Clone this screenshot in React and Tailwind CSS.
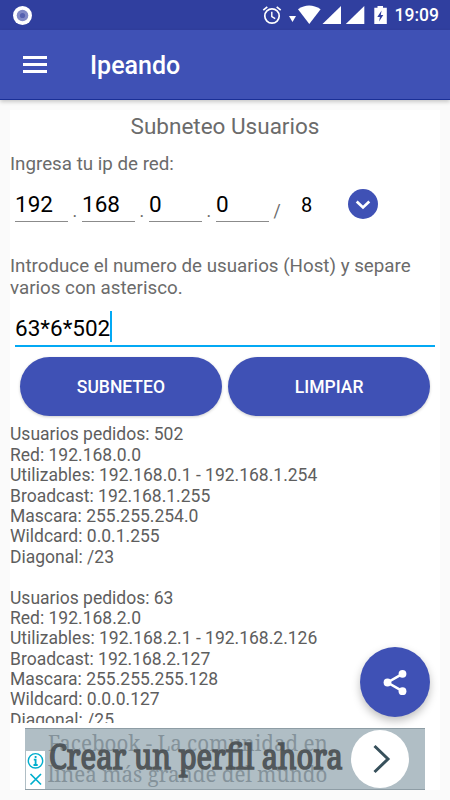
import React from "react";

function StatusBar() {
  return (
    <div className="flex h-[30px] items-center bg-[#303f9f] text-white">
      <svg className="ml-[13px] size-[19px]" viewBox="0 0 19 19">
        <circle cx="9.5" cy="9.5" r="9.5" fill="#fff" />
        <circle cx="9.5" cy="9.5" r="5.8" fill="#8189c6" />
        <circle cx="9.5" cy="9.5" r="2.6" fill="#5560b0" />
      </svg>
      <svg className="ml-auto h-[30px] w-[132px]" viewBox="262 0 132 30" fill="#fff">
        <g fill="none" stroke="#fff" strokeWidth="1.7">
          <circle cx="272" cy="16" r="7.2" />
          <path d="M271.8 11.8v4.7l3.4 2.1" strokeWidth="1.4" />
          <path d="M263.3 10.2l4-3.4M280.7 10.2l-4-3.4" />
        </g>
        <path d="M289 16h7l-3.5 6z" />
        <path d="M298 9.2Q309 1.8 320.6 9.2L309.3 24z" />
        <path d="M341 6v18h-18.5z" />
        <path d="M364.3 6v18h-18.5z" />
        <path d="M377.5 6h5.5v1.8h3.8v16.2h-12.5V7.8h3.2z" />
        <path d="M381.6 10.5l-4.3 6.5h2.6l-.8 4.5 4.2-6.6h-2.5z" fill="#303f9f" />
      </svg>
      <span className="mr-[11px] w-[45px] text-right text-[17.5px] font-medium leading-[30px]">
        19:09
      </span>
    </div>
  );
}

function Toolbar() {
  return (
    <header className="relative z-10 flex h-[70px] items-center border-b border-[#1a2f96] bg-[#3f51b5] pl-[23px] text-white shadow-[0_2px_4px_rgba(0,0,0,0.2)]">
      <div className="flex w-6 flex-col gap-[4.5px]">
        <span className="h-[2.5px] bg-white" />
        <span className="h-[2.5px] bg-white" />
        <span className="h-[2.5px] bg-white" />
      </div>
      <h1 className="ml-[43px] mt-[2px] text-[25px] font-medium leading-[30px]">Ipeando</h1>
    </header>
  );
}

function Octet({ value, separator }) {
  return (
    <div className="flex h-[34px] w-[67px] items-end">
      <div className="h-[34px] w-[52.5px] shrink-0 border-b-[1.5px] border-[#8b8b8b] text-[22.5px] leading-[32px] text-black">
        {value}
      </div>
      <span className="ml-[5px] text-[17.5px] leading-[22px]">{separator}</span>
    </div>
  );
}

const results = [
  "Usuarios pedidos: 502",
  "Red: 192.168.0.0",
  "Utilizables: 192.168.0.1 - 192.168.1.254",
  "Broadcast: 192.168.1.255",
  "Mascara: 255.255.254.0",
  "Wildcard: 0.0.1.255",
  "Diagonal: /23",
  "",
  "Usuarios pedidos: 63",
  "Red: 192.168.2.0",
  "Utilizables: 192.168.2.1 - 192.168.2.126",
  "Broadcast: 192.168.2.127",
  "Mascara: 255.255.255.128",
  "Wildcard: 0.0.0.127",
  "Diagonal: /25",
];

function AdBanner() {
  return (
    <div className="relative mx-[15px] mt-[5px] flex h-[62px] items-center overflow-hidden border-y border-[#8e9da5] bg-[#b0bec5] font-['Noto_Serif','DejaVu_Serif',serif]">
      <div className="absolute left-[23px] top-[-2px] origin-left scale-x-[0.934] whitespace-nowrap text-[22px] leading-[31px] text-[#84929a]">
        <p>Facebook - La comunidad en</p>
        <p>línea más grande del mundo</p>
      </div>
      <div className="absolute left-[24px] top-[4px] origin-left scale-x-[0.856] whitespace-nowrap text-[34px] leading-[46px] text-[#484d50] opacity-90 [-webkit-text-stroke:1.6px_#484d50]">
        Crear un perfil ahora
      </div>
      <div className="absolute bottom-0 left-[1px] flex h-[38px] w-[19px] flex-col items-center bg-white">
        <svg className="h-[38px] w-[19px]" viewBox="0 0 19 38" fill="none" stroke="#00aecd">
          <circle cx="9.5" cy="9.8" r="7.2" strokeWidth="1.4" />
          <path d="M9.6 5v2M7.8 8.7h1.8v5M7.5 14h4.2" strokeWidth="1.8" />
          <path d="M4.5 23l10.5 10.5M15 23L4.5 33.5" strokeWidth="1.7" />
        </svg>
      </div>
      <div className="ml-auto mr-[16px] flex size-[58px] items-center justify-center rounded-full bg-white">
        <svg className="size-[58px]" viewBox="0 0 58 58" fill="none" stroke="#37505b" strokeWidth="3">
          <path d="M23.5 16l13.5 13-13.5 13" />
        </svg>
      </div>
    </div>
  );
}

export default function App() {
  return (
    <div className="relative flex h-[800px] w-[450px] flex-col overflow-hidden bg-[#fafafa] font-['Roboto',sans-serif] text-[#6b6b6b]">
      <StatusBar />
      <Toolbar />
      <main className="mx-[10px] mt-[10px] flex h-[680px] flex-col bg-white">
        <h2 className="mt-[3px] text-center text-[22.5px] leading-[27px]">Subneteo Usuarios</h2>
        <p className="mt-[13px] text-[18.75px] leading-[22px]">Ingresa tu ip de red:</p>
        <div className="mt-[13px] flex h-[34px] pl-[5px]">
          <Octet value="192" separator="." />
          <Octet value="168" separator="." />
          <Octet value="0" separator="." />
          <Octet value="0" separator="/" />
          <span className="ml-[18px] w-[47px] text-[20px] leading-[34px] text-black">8</span>
          <button className="mt-px flex size-[30px] items-center justify-center rounded-full bg-[#3f51b5]">
            <svg className="size-[30px]" viewBox="0 0 30 30" fill="none" stroke="#fff" strokeWidth="2.7">
              <path d="M8.7 12.5l6.3 6 6.3-6" />
            </svg>
          </button>
        </div>
        <p className="mt-[33px] text-[18.75px] leading-[22px]">
          Introduce el numero de usuarios (Host) y separe
          <br />
          varios con asterisco.
        </p>
        <div className="mx-[5px] mt-[12px] flex h-[36px] border-b-2 border-[#03a9f4] text-[22.5px] leading-[35px] text-black">
          63*6*502
          <span className="-ml-[0.5px] h-[31px] w-[2px] bg-[#03a9f4]" />
        </div>
        <div className="mx-[10px] mt-[10px] flex gap-[6.5px] text-[17.5px] font-medium text-white">
          <button className="h-[59px] flex-1 rounded-full bg-[#3f51b5] pt-[2px] shadow-[0_1px_3px_rgba(0,0,0,0.2)]">SUBNETEO</button>
          <button className="h-[59px] flex-1 rounded-full bg-[#3f51b5] pt-[2px] shadow-[0_1px_3px_rgba(0,0,0,0.2)]">LIMPIAR</button>
        </div>
        <div className="mt-[8px] h-[299px] shrink-0 overflow-hidden pt-[0.4px] text-[17.5px] leading-[20.4px] text-[#5e5e5e]">
          {results.map((line, i) => (
            <p key={i} className="h-[20.4px]">{line}</p>
          ))}
        </div>
        <AdBanner />
      </main>
      <button className="absolute left-[360px] top-[647px] flex size-[70px] items-center justify-center rounded-full bg-[#3f51b5] shadow-[0_4px_8px_rgba(0,0,0,0.25)]">
        <svg className="size-[70px]" viewBox="0 0 70 70" fill="#fff">
          <path d="M42.5 26.8L27.5 35.5l15 8.7" fill="none" stroke="#fff" strokeWidth="2.5" />
          <circle cx="42.5" cy="26.8" r="3.9" />
          <circle cx="27.5" cy="35.5" r="3.9" />
          <circle cx="42.5" cy="44.2" r="3.9" />
        </svg>
      </button>
    </div>
  );
}
